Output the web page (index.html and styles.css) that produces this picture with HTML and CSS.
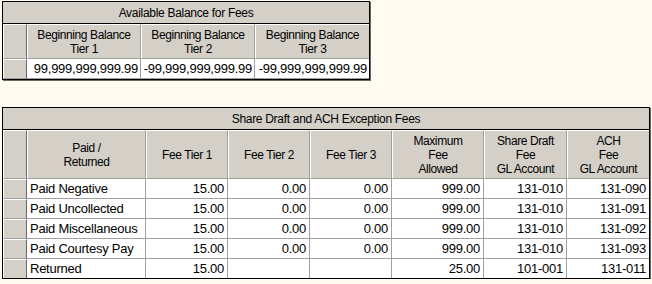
FILE: index.html
```html
<!DOCTYPE html>
<html>
<head>
<meta charset="utf-8">
<link rel="stylesheet" href="styles.css">
</head>
<body>
<div class="page">
  <table class="grid grid-top">
    <colgroup>
      <col class="c-rh"><col class="c-bal"><col class="c-bal"><col class="c-bal">
    </colgroup>
    <tr class="title-row"><th colspan="4" class="title">Available Balance for Fees</th></tr>
    <tr class="head-row top-head">
      <th class="rh"></th>
      <th>Beginning Balance<br>Tier 1</th>
      <th>Beginning Balance<br>Tier 2</th>
      <th>Beginning Balance<br>Tier 3</th>
    </tr>
    <tr class="data-row">
      <td class="rh"></td>
      <td class="num bal">99,999,999,999.99</td>
      <td class="num bal">-99,999,999,999.99</td>
      <td class="num bal">-99,999,999,999.99</td>
    </tr>
  </table>

  <table class="grid grid-bottom">
    <colgroup>
      <col class="c-rh"><col class="c-name"><col class="c-fee"><col class="c-fee"><col class="c-fee"><col class="c-max"><col class="c-gl"><col class="c-gl2">
    </colgroup>
    <tr class="title-row"><th colspan="8" class="title">Share Draft and ACH Exception Fees</th></tr>
    <tr class="head-row bottom-head">
      <th class="rh"></th>
      <th>Paid /<br>Returned</th>
      <th>Fee Tier 1</th>
      <th>Fee Tier 2</th>
      <th>Fee Tier 3</th>
      <th>Maximum<br>Fee<br>Allowed</th>
      <th>Share Draft<br>Fee<br>GL Account</th>
      <th>ACH<br>Fee<br>GL Account</th>
    </tr>
    <tr class="data-row"><td class="rh"></td><td class="txt">Paid Negative</td><td class="num">15.00</td><td class="num">0.00</td><td class="num">0.00</td><td class="num">999.00</td><td class="num">131-010</td><td class="num">131-090</td></tr>
    <tr class="data-row"><td class="rh"></td><td class="txt">Paid Uncollected</td><td class="num">15.00</td><td class="num">0.00</td><td class="num">0.00</td><td class="num">999.00</td><td class="num">131-010</td><td class="num">131-091</td></tr>
    <tr class="data-row"><td class="rh"></td><td class="txt">Paid Miscellaneous</td><td class="num">15.00</td><td class="num">0.00</td><td class="num">0.00</td><td class="num">999.00</td><td class="num">131-010</td><td class="num">131-092</td></tr>
    <tr class="data-row"><td class="rh"></td><td class="txt">Paid Courtesy Pay</td><td class="num">15.00</td><td class="num">0.00</td><td class="num">0.00</td><td class="num">999.00</td><td class="num">131-010</td><td class="num">131-093</td></tr>
    <tr class="data-row last"><td class="rh"></td><td class="txt">Returned</td><td class="num">15.00</td><td class="num"></td><td class="num"></td><td class="num">25.00</td><td class="num">101-001</td><td class="num">131-011</td></tr>
  </table>
</div>
</body>
</html>
```

FILE: styles.css
```css
html, body {
  margin: 0;
  padding: 0;
  background: #fffbf0;
}
.page {
  padding: 1px 0 0 2px;
  display: flex;
  flex-direction: column;
  align-items: flex-start;
  gap: 27px;
}
.grid {
  border-collapse: separate;
  border-spacing: 0;
  table-layout: fixed;
  border: 1px solid #000;
  box-shadow: 1px 1px 0 #6a6a6a;
  font-family: "Liberation Sans", Arial, sans-serif;
  color: #000;
}
.grid th, .grid td {
  padding: 0;
  overflow: hidden;
  white-space: nowrap;
}
.c-rh { width: 24px; }
.c-bal { width: 114px; }
.c-name { width: 119px; }
.c-fee { width: 82px; }
.c-max { width: 92px; }
.c-gl { width: 83px; }
.c-gl2 { width: 82px; }

.title {
  background: #d4d0c8;
  font-weight: normal;
  font-size: 12px;
  height: 21px;
  text-align: center;
  letter-spacing: -0.3px;
  border-bottom: 1px solid #000;
}
.head-row th {
  background: #d4d0c8;
  font-weight: normal;
  font-size: 12px;
  line-height: 14px;
  letter-spacing: -0.4px;
  text-align: center;
  vertical-align: middle;
  border-left: 1px solid #fff;
  border-top: 1px solid #fff;
  border-right: 1px solid #a0a0a0;
  border-bottom: 1px solid #a0a0a0;
}
.top-head th { height: 33px; }
.bottom-head th { height: 47px; }
.rh {
  background: #d4d0c8;
}
.head-row th.rh {
  border-right: 1px solid #696969;
}
.data-row td {
  height: 19px;
  background: #fff;
  border-right: 1px solid #a0a0a0;
  border-bottom: 1px solid #a0a0a0;
  font-size: 13px;
  line-height: 19px;
  letter-spacing: -0.25px;
}
.data-row td.rh {
  background: #d4d0c8;
  border-left: 1px solid #fff;
  border-top: 1px solid #fff;
  border-right: 1px solid #696969;
  height: 18px;
}
.data-row.last td { border-bottom: none; }
.data-row td:last-child { border-right: none; }
.head-row th:last-child { border-right: none; }
.num {
  text-align: right;
  padding-right: 3px !important;
}
.txt {
  text-align: left;
  padding-left: 3px !important;
}
.bal { padding-right: 2px !important; letter-spacing: -0.35px; }
```
